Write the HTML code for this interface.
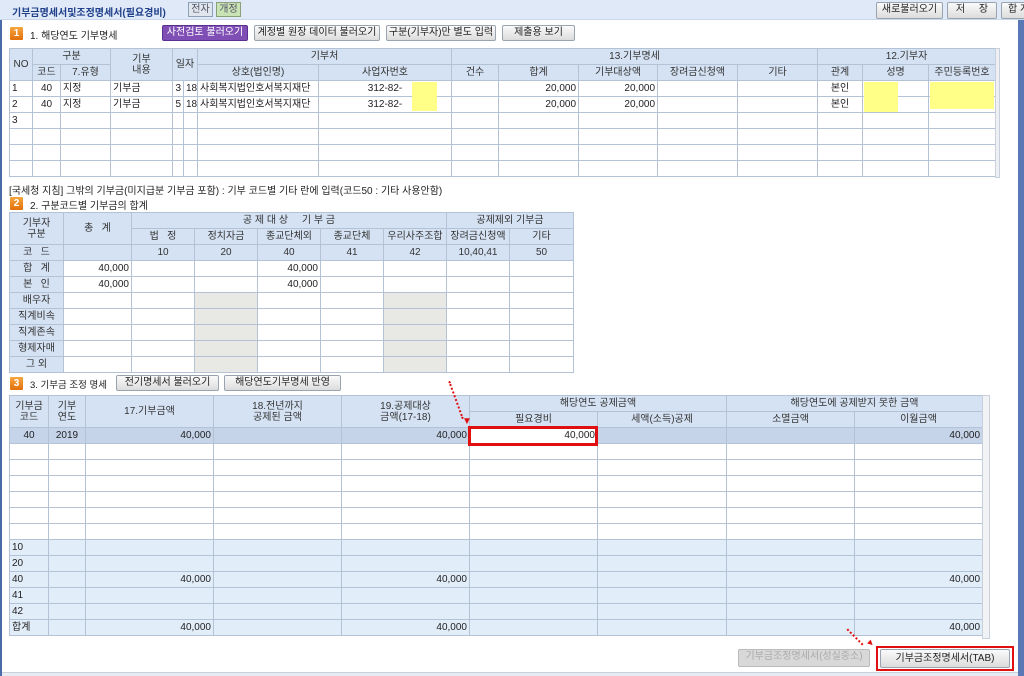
<!DOCTYPE html>
<html><head><meta charset="utf-8"><style>
*{box-sizing:border-box;margin:0;padding:0}
body{width:1024px;height:676px;overflow:hidden;background:#fff;font-family:"Liberation Sans","Noto Sans CJK KR",sans-serif;font-size:10px;color:#222;position:relative}
.abs{position:absolute;white-space:nowrap}
table{border-collapse:collapse;table-layout:fixed;position:absolute}
td{border:1px solid #b4c2d6;height:16px;padding:0 2px;white-space:nowrap;overflow:hidden;text-align:left;line-height:14px}
td.h{background:#d5e2f3;text-align:center;color:#333}
td.r{text-align:right}
td.c{text-align:center}
td.g{background:#e8e8e4}
tr.b td{background:#c6d4ea}
tr.l td{background:#e2edfa}
.btn{position:absolute;height:16px;border:1px solid #9aa4b0;border-radius:2px;background:linear-gradient(#fafafa,#dcdcdc);text-align:center;line-height:14px;font-size:10px;color:#222;white-space:nowrap;overflow:hidden}
.ico{position:absolute;width:13px;height:13px;background:linear-gradient(#f7a640,#e2700c);color:#fff;font-weight:bold;font-size:10px;text-align:center;line-height:13px;border-radius:1px}
.y{background:#ffff88}
</style></head><body>
<div class="abs" style="left:0;top:0;width:1024px;height:20px;background:#dfe9f7;border-bottom:1px solid #c9d7ea"></div>
<div class="abs" style="left:12px;top:4px;font-weight:bold;color:#1f3f8a;font-size:10px">기부금명세서및조정명세서(필요경비)</div>
<div class="abs" style="left:188px;top:2px;width:25px;height:15px;border:1px solid #8ea0b8;background:#dfe6ee;color:#556;text-align:center;line-height:13px">전자</div>
<div class="abs" style="left:216px;top:2px;width:25px;height:15px;border:1px solid #8aa07a;background:#c9e3b5;color:#556;text-align:center;line-height:13px">개정</div>
<div class="btn" style="left:876px;top:2px;width:67px;height:17px">새로불러오기</div>
<div class="btn" style="left:947px;top:2px;width:50px;height:17px">저 &nbsp; &nbsp; 장</div>
<div class="btn" style="left:1001px;top:2px;width:30px;height:17px;text-align:left;padding-left:6px">합 계</div>
<div class="abs" style="left:0;top:20px;width:2px;height:656px;background:#4a6aa8"></div>
<div class="abs" style="left:1018px;top:20px;width:6px;height:656px;background:#5a78b5"></div>

<div class="ico" style="left:10px;top:27px">1</div>
<div class="abs" style="left:30px;top:27px">1. 해당연도 기부명세</div>
<div class="btn" style="left:162px;top:25px;width:86px;background:#7f4fb5;border-color:#5a3090;color:#fff">사전검토 불러오기</div>
<div class="btn" style="left:254px;top:25px;width:126px">계정별 원장 데이터 불러오기</div>
<div class="btn" style="left:386px;top:25px;width:110px">구분(기부자)만 별도 입력</div>
<div class="btn" style="left:502px;top:25px;width:73px">제출용 보기</div>

<table style="left:9px;top:48px;width:986px">
<colgroup><col style="width:23px"><col style="width:28px"><col style="width:50px"><col style="width:62px"><col style="width:11px"><col style="width:14px"><col style="width:121px"><col style="width:133px"><col style="width:47px"><col style="width:80px"><col style="width:79px"><col style="width:80px"><col style="width:80px"><col style="width:45px"><col style="width:66px"><col style="width:67px"></colgroup>
<tr><td class="h" rowspan="2">NO</td><td class="h" colspan="2">구분</td><td class="h" rowspan="2" style="line-height:11px">기부<br>내용</td><td class="h" colspan="2" rowspan="2">일자</td><td class="h" colspan="2">기부처</td><td class="h" colspan="5">13.기부명세</td><td class="h" colspan="3">12.기부자</td></tr>
<tr><td class="h">코드</td><td class="h">7.유형</td><td class="h">상호(법인명)</td><td class="h">사업자번호</td><td class="h">건수</td><td class="h">합계</td><td class="h">기부대상액</td><td class="h">장려금신청액</td><td class="h">기타</td><td class="h">관계</td><td class="h">성명</td><td class="h">주민등록번호</td></tr>
<tr><td>1</td><td class="c">40</td><td>지정</td><td>기부금</td><td class="r">3</td><td class="r">18</td><td>사회복지법인호서복지재단</td><td class="c" style="position:relative;overflow:visible">312-82-<span class="abs y" style="left:93px;top:1px;width:25px;height:29px"></span></td><td></td><td class="r">20,000</td><td class="r">20,000</td><td></td><td></td><td class="c">본인</td><td style="position:relative;overflow:visible"><span class="abs y" style="left:1px;top:1px;width:34px;height:30px"></span></td><td style="position:relative;overflow:visible"><span class="abs y" style="left:1px;top:1px;width:64px;height:27px"></span></td></tr>
<tr><td>2</td><td class="c">40</td><td>지정</td><td>기부금</td><td class="r">5</td><td class="r">18</td><td>사회복지법인호서복지재단</td><td class="c">312-82-</td><td></td><td class="r">20,000</td><td class="r">20,000</td><td></td><td></td><td class="c">본인</td><td></td><td></td></tr>
<tr><td>3</td><td></td><td></td><td></td><td></td><td></td><td></td><td></td><td></td><td></td><td></td><td></td><td></td><td></td><td></td><td></td></tr>
<tr><td></td><td></td><td></td><td></td><td></td><td></td><td></td><td></td><td></td><td></td><td></td><td></td><td></td><td></td><td></td><td></td></tr>
<tr><td></td><td></td><td></td><td></td><td></td><td></td><td></td><td></td><td></td><td></td><td></td><td></td><td></td><td></td><td></td><td></td></tr>
<tr><td></td><td></td><td></td><td></td><td></td><td></td><td></td><td></td><td></td><td></td><td></td><td></td><td></td><td></td><td></td><td></td></tr>
</table>
<div class="abs" style="left:995px;top:48px;width:5px;height:130px;background:#eef0f4;border:1px solid #c8d0dc"></div>

<div class="abs" style="left:9px;top:182px">[국세청 지침] 그밖의 기부금(미지급분 기부금 포함) : 기부 코드별 기타 란에 입력(코드50 : 기타 사용안함)</div>
<div class="ico" style="left:10px;top:197px">2</div>
<div class="abs" style="left:30px;top:197px">2. 구분코드별 기부금의 합계</div>

<table style="left:9px;top:212px;width:564px">
<colgroup><col style="width:54px"><col style="width:68px"><col style="width:63px"><col style="width:63px"><col style="width:63px"><col style="width:63px"><col style="width:63px"><col style="width:63px"><col style="width:64px"></colgroup>
<tr><td class="h" rowspan="2" style="line-height:11px">기부자<br>구분</td><td class="h" rowspan="2">총 &nbsp; 계</td><td class="h" colspan="5">공 제 대 상 &nbsp; &nbsp; 기 부 금</td><td class="h" colspan="2">공제제외 기부금</td></tr>
<tr><td class="h">법 &nbsp; 정</td><td class="h">정치자금</td><td class="h">종교단체외</td><td class="h">종교단체</td><td class="h">우리사주조합</td><td class="h">장려금신청액</td><td class="h">기타</td></tr>
<tr><td class="h">코 &nbsp; 드</td><td class="h"></td><td class="h">10</td><td class="h">20</td><td class="h">40</td><td class="h">41</td><td class="h">42</td><td class="h">10,40,41</td><td class="h">50</td></tr>
<tr><td class="h">합 &nbsp; 계</td><td class="r">40,000</td><td></td><td></td><td class="r">40,000</td><td></td><td></td><td></td><td></td></tr>
<tr><td class="h">본 &nbsp; 인</td><td class="r">40,000</td><td></td><td></td><td class="r">40,000</td><td></td><td></td><td></td><td></td></tr>
<tr><td class="h">배우자</td><td></td><td></td><td class="g"></td><td></td><td></td><td class="g"></td><td></td><td></td></tr>
<tr><td class="h">직계비속</td><td></td><td></td><td class="g"></td><td></td><td></td><td class="g"></td><td></td><td></td></tr>
<tr><td class="h">직계존속</td><td></td><td></td><td class="g"></td><td></td><td></td><td class="g"></td><td></td><td></td></tr>
<tr><td class="h">형제자매</td><td></td><td></td><td class="g"></td><td></td><td></td><td class="g"></td><td></td><td></td></tr>
<tr><td class="h">그 외</td><td></td><td></td><td class="g"></td><td></td><td></td><td class="g"></td><td></td><td></td></tr>
</table>

<div class="ico" style="left:10px;top:377px">3</div>
<div class="abs" style="left:30px;top:377px;font-size:9.5px">3. 기부금 조정 명세</div>
<div class="btn" style="left:116px;top:375px;width:103px">전기명세서 불러오기</div>
<div class="btn" style="left:224px;top:375px;width:117px">해당연도기부명세 반영</div>

<table style="left:9px;top:395px;width:973px">
<colgroup><col style="width:39px"><col style="width:37px"><col style="width:128px"><col style="width:128px"><col style="width:128px"><col style="width:128px"><col style="width:129px"><col style="width:128px"><col style="width:128px"></colgroup>
<tr><td class="h" rowspan="2" style="line-height:11px">기부금<br>코드</td><td class="h" rowspan="2" style="line-height:11px">기부<br>연도</td><td class="h" rowspan="2">17.기부금액</td><td class="h" rowspan="2" style="line-height:11px">18.전년까지<br>공제된 금액</td><td class="h" rowspan="2" style="line-height:11px">19.공제대상<br>금액(17-18)</td><td class="h" colspan="2">해당연도 공제금액</td><td class="h" colspan="2">해당연도에 공제받지 못한 금액</td></tr>
<tr><td class="h">필요경비</td><td class="h">세액(소득)공제</td><td class="h">소멸금액</td><td class="h">이월금액</td></tr>
<tr class="b"><td class="c">40</td><td class="c">2019</td><td class="r">40,000</td><td></td><td class="r">40,000</td><td class="r" style="background:#fff">40,000</td><td></td><td></td><td class="r">40,000</td></tr>
<tr><td></td><td></td><td></td><td></td><td></td><td></td><td></td><td></td><td></td></tr>
<tr><td></td><td></td><td></td><td></td><td></td><td></td><td></td><td></td><td></td></tr>
<tr><td></td><td></td><td></td><td></td><td></td><td></td><td></td><td></td><td></td></tr>
<tr><td></td><td></td><td></td><td></td><td></td><td></td><td></td><td></td><td></td></tr>
<tr><td></td><td></td><td></td><td></td><td></td><td></td><td></td><td></td><td></td></tr>
<tr><td></td><td></td><td></td><td></td><td></td><td></td><td></td><td></td><td></td></tr>
<tr class="l"><td>10</td><td></td><td></td><td></td><td></td><td></td><td></td><td></td><td></td></tr>
<tr class="l"><td>20</td><td></td><td></td><td></td><td></td><td></td><td></td><td></td><td></td></tr>
<tr class="l"><td>40</td><td></td><td class="r">40,000</td><td></td><td class="r">40,000</td><td></td><td></td><td></td><td class="r">40,000</td></tr>
<tr class="l"><td>41</td><td></td><td></td><td></td><td></td><td></td><td></td><td></td><td></td></tr>
<tr class="l"><td>42</td><td></td><td></td><td></td><td></td><td></td><td></td><td></td><td></td></tr>
<tr class="l"><td>합계</td><td></td><td class="r">40,000</td><td></td><td class="r">40,000</td><td></td><td></td><td></td><td class="r">40,000</td></tr>
</table>
<div class="abs" style="left:982px;top:395px;width:8px;height:244px;background:#f0f2f5;border:1px solid #c8d0dc"></div>
<div class="abs" style="left:468px;top:426px;width:130px;height:20px;border:3px solid #e01010"></div>
<div class="abs" style="left:455px;top:380px;width:2px;height:40px;border-left:2px dotted #e01010;transform:rotate(-20deg)"></div>
<div class="abs" style="left:462px;top:416px;color:#e01010;font-size:10px">▼</div>
<div class="abs" style="left:854px;top:626px;width:2px;height:22px;border-left:2px dotted #e01010;transform:rotate(-45deg)"></div>
<div class="abs" style="left:866px;top:638px;color:#e01010;font-size:9px;transform:rotate(-45deg)">▼</div>

<div class="btn" style="left:738px;top:649px;width:132px;height:18px;color:#aaa;background:#d8d8d8;border-color:#bbb">기부금조정명세서(성실중소)</div>
<div class="abs" style="left:876px;top:646px;width:138px;height:25px;border:2px solid #e01010"></div>
<div class="btn" style="left:880px;top:649px;width:130px;height:19px;line-height:17px">기부금조정명세서(TAB)</div>
<div class="abs" style="left:2px;top:672px;width:1016px;height:4px;background:#e8ecf2;border-top:1px solid #c8d0dc"></div>
</body></html>
